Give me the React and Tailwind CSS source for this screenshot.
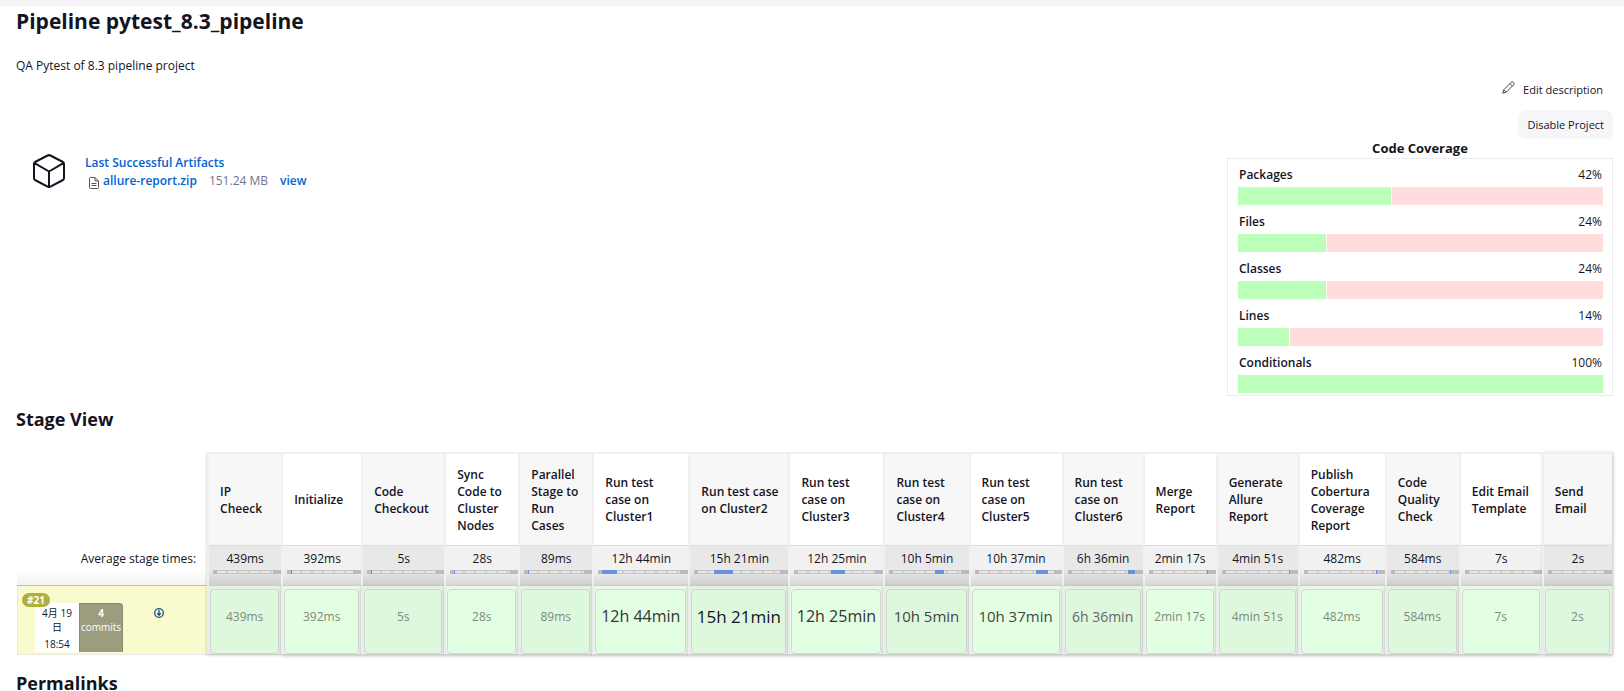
const stages = [
  { name: 'IP Cheeck', time: '439ms', w: 'w-[74px]', at: 0, len: 0 },
  { name: 'Initialize', time: '392ms', w: 'w-[80px]', at: 0, len: 1 },
  { name: 'Code Checkout', time: '5s', w: 'w-[83px]', at: 0, len: 1 },
  { name: 'Sync Code to Cluster Nodes', time: '28s', w: 'w-[74px]', at: 0, len: 1 },
  { name: 'Parallel Stage to Run Cases', time: '89ms', w: 'w-[74px]', at: 0, len: 1 },
  { name: 'Run test case on Cluster1', time: '12h 44min', w: 'w-[96px]', at: 0, len: 19, big: 'text-[16px] text-[#333]' },
  { name: 'Run test case on Cluster2', time: '15h 21min', w: 'w-[100px]', at: 19, len: 23, big: 'text-[17px] text-[#14141f]' },
  { name: 'Run test case on Cluster3', time: '12h 25min', w: 'w-[95px]', at: 42, len: 19, big: 'text-[16px] text-[#333]' },
  { name: 'Run test case on Cluster4', time: '10h 5min', w: 'w-[85px]', at: 62, len: 14, big: 'text-[15px] text-[#444]' },
  { name: 'Run test case on Cluster5', time: '10h 37min', w: 'w-[93px]', at: 77, len: 16, big: 'text-[15px] text-[#444]' },
  { name: 'Run test case on Cluster6', time: '6h 36min', w: 'w-[81px]', at: 90, len: 10, big: 'text-[14px] text-[#666]' },
  { name: 'Merge Report', time: '2min 17s', w: 'w-[73px]', at: 99, len: 1 },
  { name: 'Generate Allure Report', time: '4min 51s', w: 'w-[82px]', at: 99, len: 1 },
  { name: 'Publish Cobertura Coverage Report', time: '482ms', w: 'w-[87px]', at: 99, len: 1 },
  { name: 'Code Quality Check', time: '584ms', w: 'w-[74px]', at: 99, len: 1 },
  { name: 'Edit Email Template', time: '7s', w: 'w-[83px]', at: 0, len: 0 },
  { name: 'Send Email', time: '2s', w: 'w-[70px]', at: 0, len: 0 },
];

const coverage = [
  ['Packages', 42],
  ['Files', 24],
  ['Classes', 24],
  ['Lines', 14],
  ['Conditionals', 100],
];

function edge(i) {
  if (i === 0) return 'shadow-[-1px_1px_2px_rgba(0,0,0,0.12)]';
  if (i === stages.length - 1) return 'shadow-[1px_1px_3px_rgba(0,0,0,0.25)]';
  return '';
}

export default function App() {
  return (
    <div className="bg-white font-['Open_Sans','Noto_Sans_CJK_SC',sans-serif] text-[12px] leading-[17px] text-[#14141f]">
      <div className="h-[6px] bg-[#f5f5f7]" />
      <main className="pl-4 pr-[11px]">
        <h1 className="text-[21px] font-bold leading-[30px]">Pipeline pytest_8.3_pipeline</h1>
        <p className="mt-[21px]">QA Pytest of 8.3 pipeline project</p>

        <div className="flex flex-col items-end text-[11px]">
          <a href="#edit" className="flex h-[30px] items-center gap-2 pr-[10px]">
            <svg viewBox="0 0 16 16" className="mb-1 size-[13px]" fill="none" stroke="#333" strokeWidth="1.1" strokeLinejoin="round">
              <path d="M1 15l1.200-4.200L11.200 1.800a1.900 1.900 0 0 1 3 3L5.200 13.800zM9.800 3.200l3 3M2.200 10.800l3 3" />
            </svg>
            Edit description
          </a>
          <button type="button" className="mt-[6px] h-[29px] rounded-lg bg-[#f6f6f8] px-[9px]">Disable Project</button>
        </div>

        <div className="flex justify-between">
          <section className="flex pl-[17px] pt-[15px]">
            <svg viewBox="0 0 32 34" className="h-[34px] w-8" fill="none" stroke="#14141f" strokeWidth="2" strokeLinejoin="round" strokeLinecap="round">
              <path d="M14.600 1.500a3 3 0 0 1 2.800 0L30 8a2 2 0 0 1 1 1.700v14.600a2 2 0 0 1-1 1.700l-12.600 6.700a3 3 0 0 1-2.800 0L2 26a2 2 0 0 1-1-1.700V9.700a2 2 0 0 1 1-1.700zM1.600 9.200L16 17.500l14.400-8.300M16 17.500v15" />
            </svg>
            <div className="ml-5 leading-[18px]">
              <a href="#artifacts" className="font-semibold text-[#0063d1]">Last Successful Artifacts</a>
              <div className="flex items-center pl-1">
                <svg viewBox="0 0 10 12" className="mt-1 h-3 w-[10px]" fill="none" stroke="#444" strokeWidth="0.9">
                  <path d="M1.500.500H6L9.500 4v6.500a1 1 0 0 1-1 1h-7a1 1 0 0 1-1-1v-9a1 1 0 0 1 1-1zM6 .500V4h3.500M2.500 6.500h5M2.500 8.500h5" />
                </svg>
                <a href="#zip" className="ml-1 font-semibold text-[#0063d1]">allure-report.zip</a>
                <span className="ml-3 text-[#73738c]">151.24 MB</span>
                <a href="#view" className="ml-3 font-semibold text-[#0063d1]">view</a>
              </div>
            </div>
          </section>

          <section className="w-[386px]">
            <h2 className="text-center text-[13px] font-bold leading-[19px]">Code Coverage</h2>
            <div className="border border-[#ececec] pb-px pl-[10px] pr-[9px]">
              {coverage.map(([name, pct]) => (
                <div key={name}>
                  <div className="flex h-7 items-center justify-between px-px pt-[2px]">
                    <span className="font-semibold">{name}</span>
                    <span>{pct}%</span>
                  </div>
                  <div className="mb-px flex h-[18px] gap-px">
                    <div className="bg-[#bfb]" style={{ width: pct + '%' }} />
                    {pct < 100 && <div className="flex-1 bg-[#fdd]" />}
                  </div>
                </div>
              ))}
            </div>
          </section>
        </div>

        <h2 className="mt-[9px] text-[18px] font-bold leading-7">Stage View</h2>

        <div className="mt-[19px] px-px">
          <table className="w-full table-fixed border-separate border-spacing-0">
            <colgroup>
              <col className="w-[190px]" />
              {stages.map((s) => <col key={s.name} className={s.w} />)}
            </colgroup>
            <thead>
              <tr className="h-[93px]">
                <td />
                {stages.map((s, i) => (
                  <th key={s.name} className={`border-l-2 border-t-2 border-[#f0f0f0] pl-[11px] pr-[7px] text-left font-semibold leading-[17px] ${i % 2 ? 'bg-white' : 'bg-[#f7f7f7]'} ${edge(i)}`}>{s.name}</th>
                ))}
              </tr>
            </thead>
            <tbody>
              <tr className="h-[41px]">
                <th className="border-b border-[#bbb] bg-linear-to-b from-white from-60% to-[#f3f3f3] p-0 pb-[14px] pr-[11px] text-right font-normal">Average stage times:</th>
                {stages.map((s, i) => (
                  <td key={s.name} className={`border-l-2 border-t border-[#dcdcdc] border-l-[#f0f0f0] bg-linear-to-b from-60% p-0 align-top ${i % 2 ? 'from-[#f1f1f1] to-[#d6d6d6]' : 'from-[#e8e8e8] to-[#cdcdcd]'} ${edge(i)}`}>
                    <div className="pt-1 text-center">{s.time}</div>
                    <div className="ml-1 mt-[3px] h-1 bg-[#bbb] pl-1 pr-2">
                      <div className="flex h-1 border-y border-[#c4c4c4] bg-[repeating-linear-gradient(90deg,#e6e6e6_0px,#e6e6e6_9px,#cfcfcf_9px,#cfcfcf_11px)]">
                        <div className="-my-px h-1 bg-[#6593dc]" style={{ marginLeft: s.at + '%', width: s.len + '%' }} />
                      </div>
                    </div>
                  </td>
                ))}
              </tr>
              <tr className="h-[69px]">
                <th className="border-b border-l border-[#e8e8e8] bg-[#fafacf] p-0 text-left align-top font-normal">
                  <div className="flex pl-[17px] pt-[17px]">
                    <div className="relative h-[49px] w-11 bg-white pt-[3px] text-center text-[10px] leading-[14px]">
                      <span className="absolute -left-[13px] -top-[10px] rounded-full bg-[#afaf3d] px-[5px] font-bold text-white">#21</span>
                      4月 19<br />日<div className="pt-[3px]">18:54</div>
                    </div>
                    <div className="h-[49px] w-11 rounded-tr border-l border-r border-t border-[#8a8a6c] bg-[#9c9c7f] pt-[2px] text-center text-[10px] font-bold leading-[14px] text-white">4<div className="font-normal">commits</div></div>
                    <a href="#changes" aria-label="Download" className="ml-[31px] mt-[5px] size-[10px]">
                      <svg viewBox="0 0 10 10" className="size-[10px]" fill="none" stroke="#204a87" strokeWidth="1.300">
                        <circle cx="5" cy="5" r="4.300" />
                        <path d="M5 2v5M3.200 5.200L5 7.200l1.800-2" />
                      </svg>
                    </a>
                  </div>
                </th>
                {stages.map((s, i) => (
                  <td key={s.name} className={`border-b border-l-2 border-[#ccc] border-l-[#ebebeb] p-0 ${i % 2 ? 'bg-[#edf6ed]' : 'bg-[#e6f0e6]'} ${edge(i) || 'shadow-[0_1px_3px_rgba(0,0,0,0.25)]'}`}>
                    <div className={`ml-px mr-[2px] mt-[2px] flex h-[65px] items-center justify-center whitespace-nowrap rounded border border-[#d0d8d0] pb-[10px] ${i % 2 ? 'bg-[#e3ffe3]' : 'bg-[#ddf8dd]'} ${s.big || 'text-[#7d8a7d]'}`}>{s.time}</div>
                  </td>
                ))}
              </tr>
            </tbody>
          </table>
        </div>

        <h2 className="mt-[14px] text-[18px] font-bold leading-7">Permalinks</h2>
      </main>
    </div>
  );
}
